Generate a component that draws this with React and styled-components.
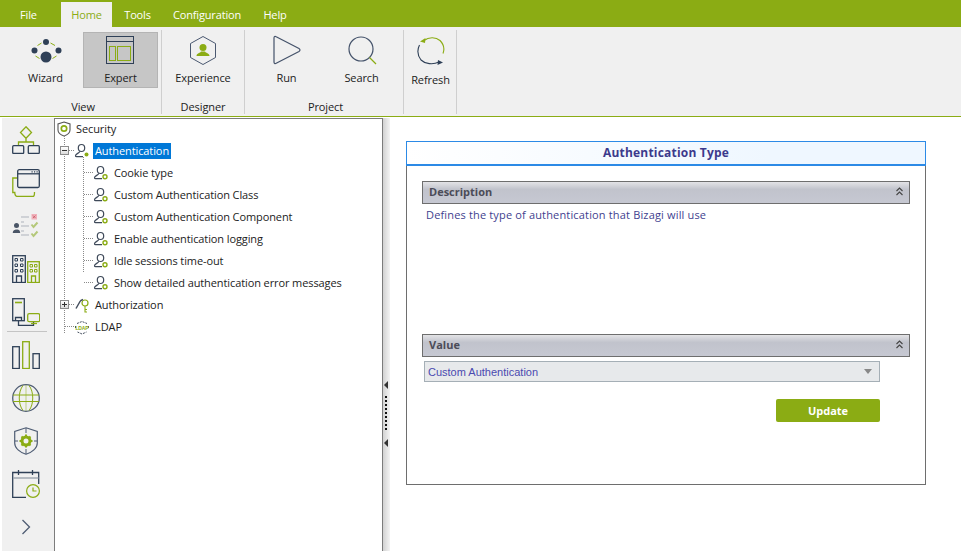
import React from "react";
import styled, { createGlobalStyle } from "styled-components";

const GREEN = "#8bac14";
const NAVY = "#2f4057";
const FONT = `"Open Sans", "Noto Sans", sans-serif`;

const Global = createGlobalStyle`
  html, body { margin: 0; padding: 0; background: #fff; }
  #root { width: 961px; height: 551px; overflow: hidden; }
  * { box-sizing: border-box; }
`;

const Page = styled.div`
  width: 961px; height: 551px; display: flex; flex-direction: column;
  font-family: ${FONT}; font-size: 11px; letter-spacing: -0.1px; color: #222; background: #fff; overflow: hidden;
`;
const MenuBar = styled.nav`
  height: 27px; background: ${GREEN}; display: flex; align-items: flex-end; flex: none;
`;
const MenuTab = styled.div`
  height: 25px; width: ${p => p.$w}px; display: flex; align-items: center; justify-content: center; letter-spacing: -0.15px;
  color: ${p => (p.$active ? GREEN : "#fff")}; background: ${p => (p.$active ? "#f0f0f0" : "transparent")};
`;
const Ribbon = styled.div`
  height: 90px; flex: none; display: flex; background: #f0f0f0; border-bottom: 1px solid ${GREEN}; padding-top: 3px;
`;
const Group = styled.section`
  width: ${p => p.$w}px; height: 84px; flex: none; border-right: 1px solid #cfcfcf;
  display: flex; flex-direction: column; align-items: stretch;
`;
const GroupItems = styled.div`
  height: 58px; display: flex; padding-left: ${p => p.$pl || 0}px; padding-top: 2px;
`;
const RibbonBtn = styled.button`
  width: ${p => p.$w}px; height: 56px; padding: 2px 0 0; font: inherit; letter-spacing: inherit; color: #222;
  display: flex; flex-direction: column; align-items: center; border: 1px solid ${p => (p.$active ? "#b4b4b4" : "transparent")};
  background: ${p => (p.$active ? "#c6c6c6" : "transparent")};
  & > span { margin-top: ${p => p.$gap ?? 5}px; line-height: 15px; }
`;
const GroupLabel = styled.div`
  text-align: center; line-height: 15px; margin-top: 11px; padding-left: ${p => p.$pl || 0}px;
`;
const Body = styled.div`
  flex: 1; min-height: 0; display: flex; padding-top: 1px;
`;
const SideBar = styled.aside`
  width: 52px; margin-left: 2px; flex: none; background: #f0f0f0; display: flex; flex-direction: column; align-items: stretch;
`;
const SideItem = styled.div`
  height: 43px; flex: none; display: flex; align-items: center; justify-content: center; padding-right: 4px;
`;
const SideRule = styled.div`
  height: 1px; margin: -2px 7px 1.5px 5px; background: #c4c4c4; flex: none;
`;
const TreePanel = styled.div`
  width: 329px; flex: none; border-left: 1px solid #7c7c7c; border-right: 1px solid #7c7c7c; background: #fff;
  box-shadow: inset 0 1px 0 #7c7c7c;
`;
const TreeRow = styled.div`
  height: 22px; position: relative; display: flex; align-items: center; padding-left: ${p => p.$pl}px; white-space: nowrap;
  &::before {
    content: ""; display: ${p => (p.$hx ? "block" : "none")}; position: absolute; top: 10px; left: ${p => p.$hx}px; width: ${p => p.$hw}px;
    border-top: 1px dotted #8a8a8a;
  }
`;
const VLine = styled.span`
  position: absolute; left: ${p => p.$x}px; top: ${p => p.$top}px; height: ${p => p.$h}px; border-left: 1px dotted #8a8a8a;
`;
const Expander = styled.span`
  position: absolute; left: 5px; top: 6px; width: 9px; height: 9px; border: 1px solid #8c8c8c; background: linear-gradient(#fff, #dcdcdc);
  display: flex; align-items: center; justify-content: center; z-index: 1;
  &::before { content: ""; position: absolute; left: 1px; right: 1px; top: 3px; height: 1px; background: #333; }
  &::after { content: ""; display: ${p => (p.$plus ? "block" : "none")}; position: absolute; top: 1px; bottom: 1px; left: 3px; width: 1px; background: #333; }
`;
const TreeIcon = styled.span`
  width: 16px; height: 16px; flex: none; display: flex; margin-right: ${p => p.$mr ?? 3}px;
`;
const TreeLabel = styled.span`
  padding: 0 ${p => (p.$sel ? 2 : 0)}px; margin-left: ${p => (p.$sel ? -2 : 0)}px; line-height: 16px; height: 16px;
  background: ${p => (p.$sel ? "#0078d7" : "transparent")}; color: ${p => (p.$sel ? "#fff" : "#222")};
`;
const Splitter = styled.div`
  width: 7px; flex: none; background: linear-gradient(90deg, #d2d2d2, #f4f4f4); position: relative;
`;
const GripDots = styled.span`
  position: absolute; left: 2px; top: 278px; height: 34px; border-left: 2px dotted #111;
`;
const GripArrow = styled.span`
  position: absolute; left: 1px; top: ${p => p.$y}px; width: 0; height: 0;
  border: 4px solid transparent; border-left: 0; border-right: 4px solid #333;
`;
const Main = styled.main`
  flex: 1; min-width: 0; padding: 23px 35px 0 16px; background: #fff;
`;
const Card = styled.div`
  height: 344px; border: 1px solid #6e6e6e; border-top: 0;
`;
const CardTitle = styled.h2`
  margin: 0 -1px; height: 25px; border: 1px solid #2c8ae6; border-bottom-width: 2px;
  background: linear-gradient(90deg, #fff, #eff7ff 70%); text-align: center;
  font: 700 12px/22px ${FONT}; letter-spacing: 0.2px; color: #3d3a8c;
`;
const CardBody = styled.div`
  padding: 15px 15px 0;
`;
const SectionHead = styled.div`
  height: 23px; border: 1px solid #6e6e6e; padding: 0 6px 2px; display: flex; justify-content: space-between; align-items: center;
  background: linear-gradient(#e3e3e6, #c1c3cc 35%, #c6c8d2); font-weight: 700; color: #4c4c58; letter-spacing: 0;
`;
const Description = styled.p`
  margin: 2px 0 0 4px; height: 128px; line-height: 18px; color: #3f3f8f; letter-spacing: 0.16px;
`;
const Select = styled.div`
  width: 456px; height: 21px; margin: 4px 0 0 2px; border: 1px solid #a5afb6; background: #e7e9eb; color: #4a4ab0; padding: 0 7px 0 3px;
  font: 11px "Liberation Sans", Arial, sans-serif; letter-spacing: 0;
  display: flex; align-items: center; justify-content: space-between;
  &::after { content: ""; border: 4px solid transparent; border-top: 5px solid #888; border-bottom: 0; }
`;
const Actions = styled.div`
  width: 458px; display: flex; justify-content: flex-end; margin-top: 17px;
`;
const UpdateBtn = styled.button`
  width: 104px; height: 23px; border: 0; border-radius: 2px; background: ${GREEN}; color: #fff; font: 700 11px ${FONT}; padding: 0;
`;

const Svg = ({ w, h, children }) => (
  <svg width={w} height={h} viewBox={`0 0 ${w} ${h}`} fill="none" style={{ display: "block", flex: "none" }}>{children}</svg>
);

const Wizard = () => (
  <Svg w={32} h={30}>
    <g fill={NAVY}><circle cx="16" cy="7" r="3" /><circle cx="4.5" cy="15.5" r="3" /><circle cx="28.5" cy="15.5" r="3" /><circle cx="16" cy="22" r="5.5" /></g>
    <g stroke={GREEN} strokeWidth="1"><path d="M7.5 10.5 11.5 8M20.5 8l4.5 2.5M5.5 21l4 2.5M22.5 23.5l4-2.5" /></g>
  </Svg>
);
const Expert = () => (
  <Svg w={30} h={30}>
    <rect x=".5" y="1.5" width="27" height="27" stroke={NAVY} />
    <path d="M.5 6.5h27" stroke={NAVY} />
    <rect x="3.500" y="11.500" width="6" height="14" stroke={GREEN} />
    <rect x="11.500" y="11.500" width="13" height="14" stroke={GREEN} />
  </Svg>
);
const Experience = () => (
  <Svg w={30} h={30}>
    <path d="M15 1.5 27.5 8.5v14L15 29.5 2.5 22.5v-14z" stroke="#4a5870" strokeLinejoin="round" />
    <circle cx="15" cy="12.5" r="3.5" fill={GREEN} />
    <path d="M8.5 21c0-3 4-3 4.5-4.5h4c.5 1.500 4.500 1.500 4.500 4.500z" fill={GREEN} />
  </Svg>
);
const Run = () => (
  <Svg w={30} h={30}>
    <path d="M2 3c0-1.500 1-2 2.200-1.300L27 13.500c1.300.800 1.300 2.200 0 3L4.200 28.300C3 29 2 28.500 2 27z" stroke="#44526a" strokeWidth="1.200" />
  </Svg>
);
const Search = () => (
  <Svg w={32} h={30}>
    <circle cx="15" cy="14" r="12" stroke="#44526a" strokeWidth="1.200" />
    <path d="M23.500 22.500 30 29" stroke={GREEN} strokeWidth="1.200" />
  </Svg>
);
const Refresh = () => (
  <Svg w={30} h={32}>
    <path d="M8 5.500C13 1.500 20 2 24 5.500c4 4 4.500 9 3 13" stroke={GREEN} strokeWidth="1.100" />
    <path d="M4 6.500 9.500 3 9 8z" fill={GREEN} />
    <path d="M3.500 10C.5 16 2 21 5 25c4 4 12 5 18 2" stroke={NAVY} strokeWidth="1.100" />
    <path d="M27 27.500 21.500 30l.5-5z" fill={NAVY} />
  </Svg>
);

const S = { stroke: NAVY, strokeWidth: 1.3 };
const Side1 = () => (
  <Svg w={28} h={28}>
    <path d="M14 .8 19.500 6.500 14 12.200 8.500 6.500z" stroke={GREEN} strokeWidth="1.300" />
    <path d="M14 12.500v3.500M6.500 20v-4h15v4" stroke={GREEN} strokeWidth="1.300" />
    <rect x=".7" y="19.700" width="11" height="7.800" rx="1" {...S} />
    <rect x="16.300" y="19.700" width="11" height="7.800" rx="1" {...S} />
  </Svg>
);
const Side2 = () => (
  <Svg w={28} h={28}>
    <path d="M5 9H.8v14.500h2c0 0 0 4 3 4H21c1.500 0 1.500-1.500 1.500-4.500" stroke={GREEN} strokeWidth="1.300" />
    <rect x="5.700" y=".7" width="21.600" height="17.800" rx="1.500" {...S} />
    <path d="M5.700 4.800h21.600" {...S} />
    <path d="M19.500 2.800h1.200M22 2.800h1.200M24.500 2.800h1.200" {...S} />
  </Svg>
);
const Side3 = () => (
  <Svg w={28} h={24}>
    <circle cx="4.500" cy="11.500" r="2.500" fill="#4a5566" />
    <path d="M.8 19c0-3 2-3 3.700-3.500s3.700.5 3.700 3.500z" fill="#4a5566" />
    <path d="M9 3h8M9 8h3M9 12h8M9 17h3M9 21h8" stroke="#aeb3bc" strokeWidth="1" />
    <rect x="20" y=".5" width="4.500" height="4.500" fill="#efb4bc" stroke="#f0b0ba" />
    <path d="M21 1.500 23.500 4M23.500 1.500 21 4" stroke="#c75765" strokeWidth=".8" />
    <path d="M19.500 10.500l2 2.500 4-4.500" stroke="#b4c87a" strokeWidth="2" />
    <path d="M19.500 19.500l2 2.500 4-4.500" stroke="#b4c87a" strokeWidth="2" />
  </Svg>
);
const Side4 = () => (
  <Svg w={28} h={28}>
    <rect x=".7" y=".7" width="12.600" height="26.800" {...S} />
    <path d="M3 3.500h2.500v2.500H3zM8.500 3.500H11v2.500H8.500zM3 9h2.500v2.500H3zM8.500 9H11v2.500H8.500zM3 14.500h2.500V17H3zM8.500 14.500H11V17H8.500z" stroke={NAVY} strokeWidth="1" />
    <path d="M4.500 27v-6h5v6" {...S} />
    <rect x="15.700" y="6.700" width="11.600" height="20.800" stroke={GREEN} strokeWidth="1.300" />
    <path d="M18 9.500h2.500V12H18zM22.500 9.500H25V12h-2.500zM18 14.500h2.500V17H18zM22.500 14.500H25V17h-2.500z" stroke={GREEN} strokeWidth="1" />
    <path d="M19.500 27v-6h4v6" stroke={GREEN} strokeWidth="1.300" />
  </Svg>
);
const Side5 = () => (
  <Svg w={28} h={28}>
    <rect x=".7" y=".7" width="11.600" height="22" {...S} />
    <path d="M3 4.500h7" stroke={GREEN} strokeWidth="1.600" />
    <path d="M3.500 22.500v-3h6v3" {...S} />
    <path d="M6.500 23v4.500h15V24" {...S} />
    <rect x="15.700" y="15.700" width="12" height="8" rx="1.500" stroke={GREEN} strokeWidth="1.300" />
    <path d="M19 25.500h6" stroke={GREEN} strokeWidth="1.300" />
  </Svg>
);
const Side6 = () => (
  <Svg w={28} h={28}>
    <rect x=".7" y="5.700" width="6.600" height="21.800" {...S} />
    <rect x="10.700" y=".7" width="6.600" height="26.800" stroke={GREEN} strokeWidth="1.300" />
    <rect x="21" y="12.700" width="6.300" height="14.800" {...S} />
  </Svg>
);
const Side7 = () => (
  <Svg w={28} h={28}>
    <circle cx="14" cy="14" r="13.300" stroke="#4f5d74" strokeWidth="1.300" />
    <path d="M1 11h26M1 17.500h26" stroke={GREEN} strokeWidth="1" />
    <path d="M14 .8v26.400" stroke={GREEN} strokeWidth=".5" />
    <path d="M11 1.500c-5 6-5 19 0 25M17 1.500c5 6 5 19 0 25" stroke={GREEN} strokeWidth="1" />
  </Svg>
);
const Side8 = () => (
  <Svg w={24} h={28}>
    <path d="M12 .8 23.300 4.500V16c0 5.500-6 9.500-11.300 11.300C6.700 25.500.7 21.500.7 16V4.500z" stroke="#4f5d74" strokeWidth="1.200" />
    <path d="M12 1v5M12 22v5M1 14h3M20 14h3" stroke="#4f5d74" strokeWidth="1" />
    <circle cx="12" cy="14" r="4" stroke={GREEN} strokeWidth="3" />
    <path d="M12 7.500v3M12 17.500v3M5.500 14h3M15.500 14h3M7.500 9.500l2 2M14.500 16.500l2 2M16.500 9.500l-2 2M9.500 16.500l-2 2" stroke={GREEN} strokeWidth="2" />
  </Svg>
);
const Side9 = () => (
  <Svg w={28} h={28}>
    <path d="M14 27.500H.7V2.500h26V14" {...S} />
    <path d="M1 8h25.500" stroke="#9aa2ad" strokeWidth="1.400" />
    <path d="M6.500 0v5M20.500 0v5" {...S} />
    <circle cx="21" cy="21" r="6.400" stroke={GREEN} strokeWidth="1.200" />
    <path d="M21 17.500V21h3.500" stroke={GREEN} strokeWidth="1.200" />
  </Svg>
);
const Chevron = () => (
  <Svg w={10} h={16}><path d="M1.500 1 8.500 8 1.500 15" stroke="#4f5d74" strokeWidth="1.300" /></Svg>
);

const Shield = () => (
  <Svg w={16} h={16}>
    <path d="M8 1 14 3v6c0 3-3 5-6 6-3-1-6-3-6-6V3z" stroke="#555" strokeWidth="1.100" />
    <circle cx="8" cy="7.500" r="2.700" stroke={GREEN} strokeWidth="1.700" />
  </Svg>
);
const Person = ({ dot }) => (
  <Svg w={16} h={16}>
    <ellipse cx="7.500" cy="5" rx="3.200" ry="3.500" stroke="#3f4a5a" strokeWidth="1.200" />
    <path d="M5.800 8.200c0 1.800-4.300 2.600-4.300 4.500 0 .6.500 1 1.200 1H9" stroke="#3f4a5a" strokeWidth="1.200" />
    {dot === "solid"
      ? <circle cx="12.500" cy="11.500" r="2" fill={GREEN} />
      : <circle cx="12" cy="11.800" r="2" stroke={GREEN} strokeWidth="1.400" />}
  </Svg>
);
const Key = () => (
  <Svg w={16} h={16}>
    <circle cx="11" cy="6" r="3" stroke={GREEN} strokeWidth="1.200" />
    <path d="M11 9v6.500M11 12.500h2M11 15h2" stroke={GREEN} strokeWidth="1.100" />
    <path d="M2 11.500 6 4.500c.6-1 1.500-1.500 3-2" stroke="#46505f" strokeWidth="1.500" />
  </Svg>
);
const Ldap = () => (
  <Svg w={16} h={16}>
    <path d="M3 4.500 8 2.500l5 2M14.500 7v3M3.500 13 8 15l4.500-2M1.500 7v3" stroke="#46505f" strokeWidth="1" strokeDasharray="2 1" />
    <text x="8" y="10.500" textAnchor="middle" fontSize="5" fontWeight="700" fill={GREEN} fontFamily="Liberation Sans, sans-serif">LDAP</text>
  </Svg>
);
const Collapse = () => (
  <Svg w={7} h={9}>
    <path d="M.5 4 3.500 1l3 3M.5 8l3-3 3 3" stroke="#444" strokeWidth="1.100" />
  </Svg>
);

const children = [
  "Cookie type",
  "Custom Authentication Class",
  "Custom Authentication Component",
  "Enable authentication logging",
  "Idle sessions time-out",
  "Show detailed authentication error messages",
];
const sideIcons = [Side1, Side2, Side3, Side4, Side5];
const sideIcons2 = [Side6, Side7, Side8, Side9, Chevron];

export default function App() {
  return (
    <Page>
      <Global />
      <MenuBar>
        <MenuTab $w={57}>File</MenuTab>
        <MenuTab $w={4} />
        <MenuTab $w={51} $active>Home</MenuTab>
        <MenuTab $w={51}>Tools</MenuTab>
        <MenuTab $w={88}>Configuration</MenuTab>
        <MenuTab $w={48}>Help</MenuTab>
      </MenuBar>
      <Ribbon>
        <Group $w={162}>
          <GroupItems $pl={8}>
            <RibbonBtn $w={75}><Wizard /><span>Wizard</span></RibbonBtn>
            <RibbonBtn $w={75} $active><Expert /><span>Expert</span></RibbonBtn>
          </GroupItems>
          <GroupLabel $pl={5}>View</GroupLabel>
        </Group>
        <Group $w={83}>
          <GroupItems><RibbonBtn $w={82}><Experience /><span>Experience</span></RibbonBtn></GroupItems>
          <GroupLabel>Designer</GroupLabel>
        </Group>
        <Group $w={159}>
          <GroupItems $pl={4}>
            <RibbonBtn $w={75}><Run /><span>Run</span></RibbonBtn>
            <RibbonBtn $w={75}><Search /><span>Search</span></RibbonBtn>
          </GroupItems>
          <GroupLabel $pl={3}>Project</GroupLabel>
        </Group>
        <Group $w={53}>
          <GroupItems $pl={1}><RibbonBtn $w={51} $gap={5}><Refresh /><span>Refresh</span></RibbonBtn></GroupItems>
        </Group>
      </Ribbon>
      <Body>
        <SideBar>
          {sideIcons.map((I, i) => <SideItem key={i}><I /></SideItem>)}
          <SideRule />
          {sideIcons2.map((I, i) => <SideItem key={i}><I /></SideItem>)}
        </SideBar>
        <TreePanel>
          <TreeRow $pl={1}><TreeIcon $mr={4}><Shield /></TreeIcon><TreeLabel>Security</TreeLabel>
            <VLine $x={9} $top={17} $h={198} />
          </TreeRow>
          <TreeRow $pl={19} $hx={14} $hw={5}>
            <Expander />
            <TreeIcon $mr={5}><Person dot="solid" /></TreeIcon><TreeLabel $sel>Authentication</TreeLabel>
            <VLine $x={28} $top={17} $h={115} />
          </TreeRow>
          {children.map(c => (
            <TreeRow key={c} $pl={38} $hx={29} $hw={9}>
              <TreeIcon $mr={5}><Person /></TreeIcon><TreeLabel>{c}</TreeLabel>
            </TreeRow>
          ))}
          <TreeRow $pl={19} $hx={14} $hw={5}>
            <Expander $plus />
            <TreeIcon $mr={5}><Key /></TreeIcon><TreeLabel>Authorization</TreeLabel>
          </TreeRow>
          <TreeRow $pl={19} $hx={10} $hw={9}>
            <TreeIcon $mr={5}><Ldap /></TreeIcon><TreeLabel>LDAP</TreeLabel>
          </TreeRow>
        </TreePanel>
        <Splitter>
          <GripArrow $y={263} />
          <GripDots />
          <GripArrow $y={321} />
        </Splitter>
        <Main>
          <Card>
            <CardTitle>Authentication Type</CardTitle>
            <CardBody>
              <SectionHead>Description <Collapse /></SectionHead>
              <Description>Defines the type of authentication that Bizagi will use</Description>
              <SectionHead>Value <Collapse /></SectionHead>
              <Select>Custom Authentication</Select>
              <Actions><UpdateBtn>Update</UpdateBtn></Actions>
            </CardBody>
          </Card>
        </Main>
      </Body>
    </Page>
  );
}
